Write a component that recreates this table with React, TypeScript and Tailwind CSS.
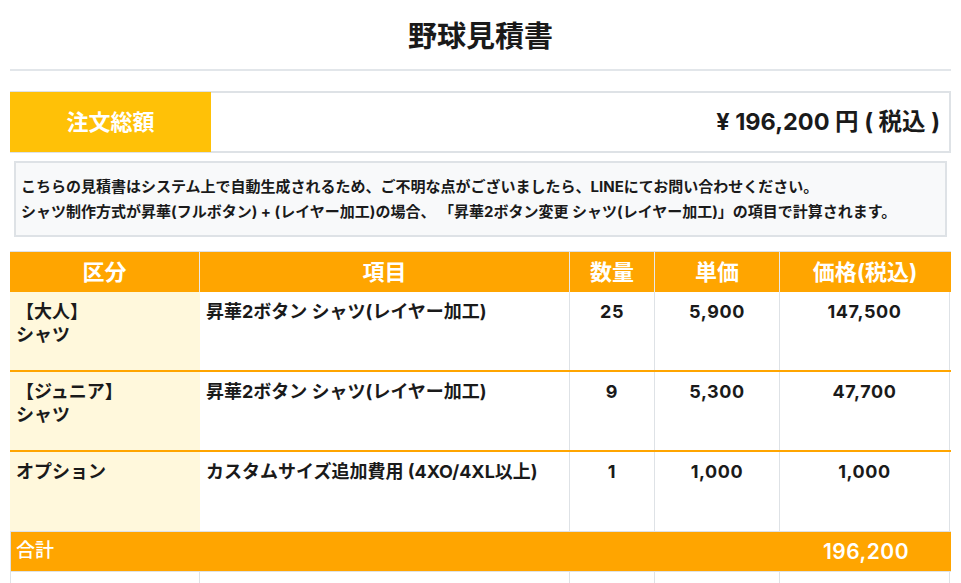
const ROWS = [
	{ id: "adult", category: ["【大人】", "シャツ"], item: "昇華2ボタン シャツ(レイヤー加工)", qty: "25", unit: "5,900", price: "147,500" },
	{ id: "junior", category: ["【ジュニア】", "シャツ"], item: "昇華2ボタン シャツ(レイヤー加工)", qty: "9", unit: "5,300", price: "47,700" },
	{ id: "option", category: ["オプション"], item: "カスタムサイズ追加費用 (4XO/4XL以上)", qty: "1", unit: "1,000", price: "1,000" },
];

const HEADERS = ["区分", "項目", "数量", "単価", "価格(税込)"];

const GRID = "grid grid-cols-[190px_370px_85px_125px_170px]";

export default function App() {
	return (
		<div
			className="w-[961px] h-[583px] overflow-hidden bg-white px-[10px] text-[#1a1a1a]"
			style={{ fontFamily: 'Inter, "Noto Sans CJK JP", sans-serif' }}
		>
			<h1 className="pt-[15px] h-[59px] text-center text-[29px] leading-[44px] font-bold">野球見積書</h1>
			<div className="mt-[10px] h-[2px] bg-[#e2e6ea]" />

			{/* total amount */}
			<div className="mt-[20px] h-[62px] flex border-2 border-l-0 border-[#dee2e6]">
				<div className="w-[201px] -my-[1px] bg-[#ffc107] flex items-center justify-center text-white text-[22px] font-bold">
					注文総額
				</div>
				<div className="flex-1 flex items-center justify-end pr-[9px] text-[23.5px] font-bold">
					¥ 196,200 円 ( 税込 )
				</div>
			</div>

			{/* notice */}
			<div className="mx-[4px] mt-[8px] h-[76px] border-2 border-[#dee2e6] bg-[#f8f9fa] px-[5px] py-[11px] text-[15px] leading-[25px] font-bold">
				<p>こちらの見積書はシステム上で自動生成されるため、ご不明な点がございましたら、LINEにてお問い合わせください。</p>
				<p>シャツ制作方式が昇華(フルボタン) + (レイヤー加工)の場合、 「昇華2ボタン変更 シャツ(レイヤー加工)」の項目で計算されます。</p>
			</div>

			{/* table */}
			<div className="mt-[14px] border-t border-[#dee2e6]">
				<div className={`${GRID} h-[40px] bg-[#ffa500] text-white text-[22px] font-bold`}>
					{HEADERS.map((h, i) => (
						<div
							key={h}
							className={`flex items-center justify-center ${i < 4 ? "border-r border-[#e8e8e8]" : ""}`}
						>
							{h}
						</div>
					))}
				</div>
				{ROWS.map((row, idx) => (
					<div
						key={row.id}
						className={`${GRID} h-[80px] text-[18px] leading-[23px] font-bold ${
							idx < 2 ? "border-b-2 border-[#ffa500]" : "border-b border-[#dee2e6]"
						}`}
					>
						<div className="bg-[#fff8dc] pl-[6px] pt-[8px]">
							{row.category.map((c) => (
								<div key={c}>{c}</div>
							))}
						</div>
						<div className="pl-[6px] pt-[8px] border-r border-[#dee2e6]">{row.item}</div>
						<div className="text-center pt-[8px] tracking-[0.6px] border-r border-[#dee2e6]">{row.qty}</div>
						<div className="text-center pt-[8px] tracking-[0.6px] border-r border-[#dee2e6]">{row.unit}</div>
						<div className="text-center pt-[8px] tracking-[0.6px] border-r border-[#dee2e6]">{row.price}</div>
					</div>
				))}
				<div className={`${GRID} h-[39px] bg-[#ffa500] text-white border-l border-[#dee2e6]`}>
					<div className="col-span-4 flex items-center pl-[5px] text-[19px] font-medium">合計</div>
					<div className="flex items-center justify-center text-[21px] tracking-[0.5px] font-semibold">196,200</div>
				</div>
				<div className={`${GRID} h-[40px] border-t border-[#dee2e6]`}>
					<div className="border-l border-r border-[#dee2e6]" />
					<div className="border-r border-[#dee2e6]" />
					<div className="border-r border-[#dee2e6]" />
					<div className="border-r border-[#dee2e6]" />
					<div className="border-r border-[#dee2e6]" />
				</div>
			</div>
		</div>
	);
}
